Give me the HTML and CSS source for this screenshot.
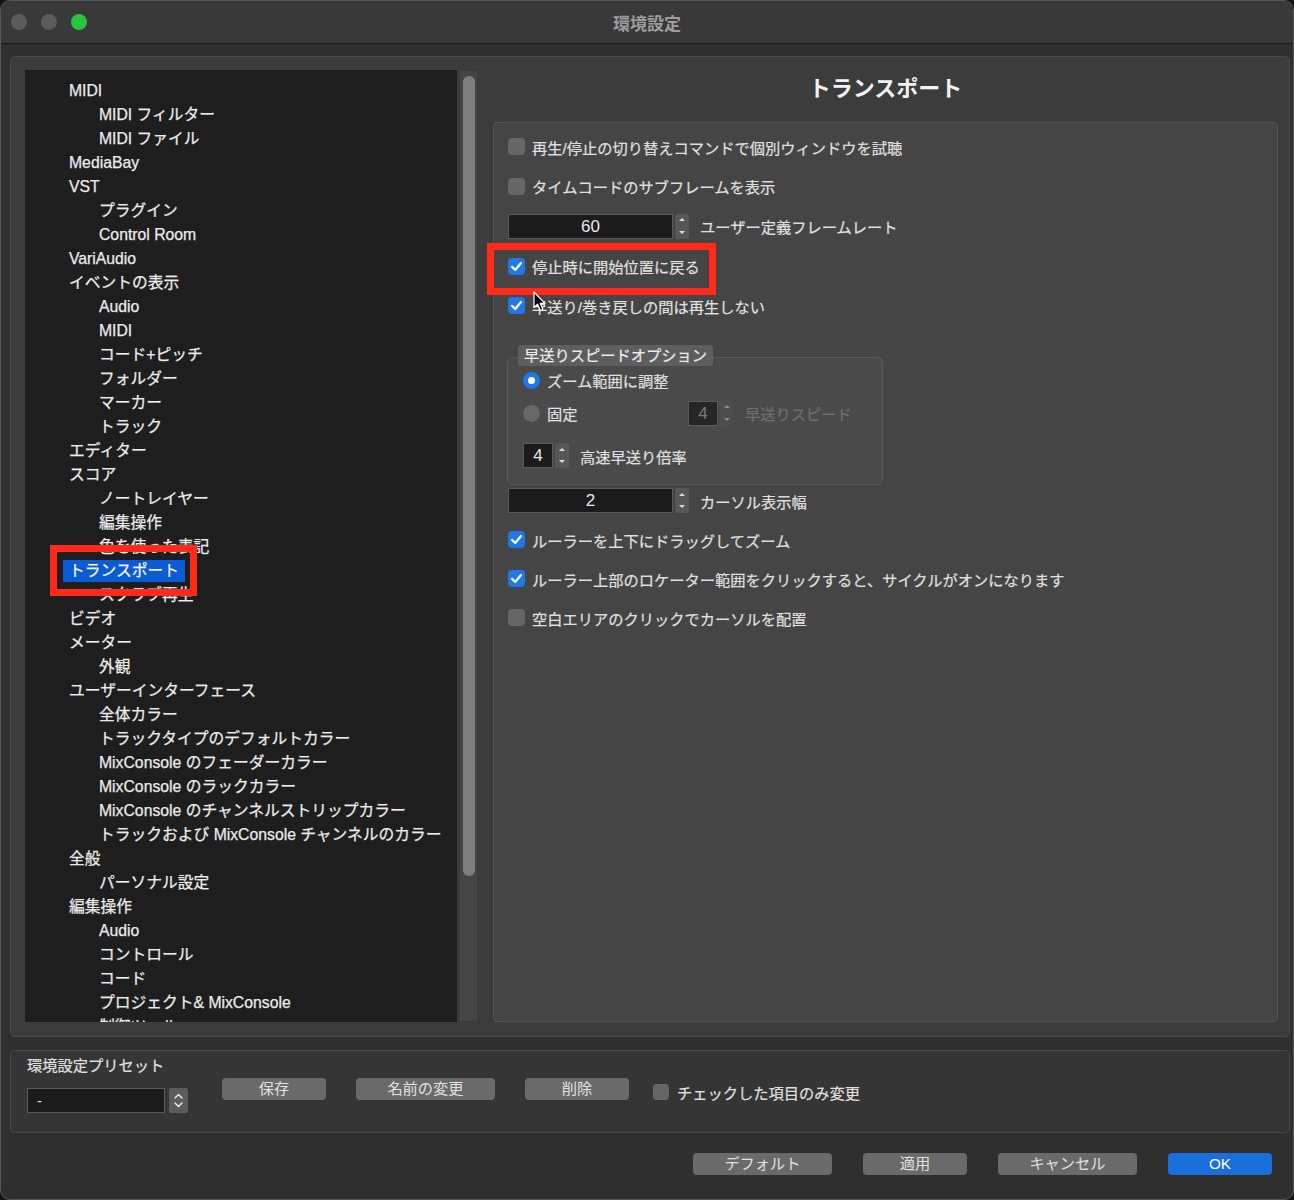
FILE: index.html
```html
<!DOCTYPE html>
<html lang="ja">
<head>
  <meta charset="UTF-8" />
  <meta name="viewport" content="width=device-width, initial-scale=1.0">
  <title>環境設定</title>
  <link rel="stylesheet" href="styles.css">
</head>
<body>
  <div class="win">
    <div class="titlebar">
      <div class="lights"><span class="dot"></span><span class="dot"></span><span class="dot green"></span></div>
      <div class="title">環境設定</div>
      <div></div>
    </div>

    <div class="main">
      <div class="tree">
        <div class="l0">MIDI</div>
        <div class="l1">MIDI フィルター</div>
        <div class="l1">MIDI ファイル</div>
        <div class="l0">MediaBay</div>
        <div class="l0">VST</div>
        <div class="l1">プラグイン</div>
        <div class="l1">Control Room</div>
        <div class="l0">VariAudio</div>
        <div class="l0">イベントの表示</div>
        <div class="l1">Audio</div>
        <div class="l1">MIDI</div>
        <div class="l1">コード+ピッチ</div>
        <div class="l1">フォルダー</div>
        <div class="l1">マーカー</div>
        <div class="l1">トラック</div>
        <div class="l0">エディター</div>
        <div class="l0">スコア</div>
        <div class="l1">ノートレイヤー</div>
        <div class="l1">編集操作</div>
        <div class="l1">色を使った表記</div>
        <div class="l0"><span class="sel">トランスポート</span></div>
        <div class="l1">スクラブ再生</div>
        <div class="l0">ビデオ</div>
        <div class="l0">メーター</div>
        <div class="l1">外観</div>
        <div class="l0">ユーザーインターフェース</div>
        <div class="l1">全体カラー</div>
        <div class="l1">トラックタイプのデフォルトカラー</div>
        <div class="l1">MixConsole のフェーダーカラー</div>
        <div class="l1">MixConsole のラックカラー</div>
        <div class="l1">MixConsole のチャンネルストリップカラー</div>
        <div class="l1">トラックおよび MixConsole チャンネルのカラー</div>
        <div class="l0">全般</div>
        <div class="l1">パーソナル設定</div>
        <div class="l0">編集操作</div>
        <div class="l1">Audio</div>
        <div class="l1">コントロール</div>
        <div class="l1">コード</div>
        <div class="l1">プロジェクト&amp; MixConsole</div>
        <div class="l1">制御ツール</div>
      </div>
      <div class="scroll"><div class="thumb"></div></div>

      <div class="page">
        <h1>トランスポート</h1>
        <div class="box">
          <div class="row r1"><span class="cb"></span><span class="txt">再生/停止の切り替えコマンドで個別ウィンドウを試聴</span></div>
          <div class="row"><span class="cb"></span><span class="txt">タイムコードのサブフレームを表示</span></div>
          <div class="row">
            <div class="spin"><span class="field wide">60</span><span class="step"><i class="up"></i><i class="dn"></i></span></div>
            <span class="txt spin-label">ユーザー定義フレームレート</span>
          </div>
          <div class="row"><span class="cb on"><svg viewBox="0 0 17 17"><polyline points="4,8.8 7.2,12 13,5"/></svg></span><span class="txt">停止時に開始位置に戻る</span></div>
          <div class="row r5"><span class="cb on"><svg viewBox="0 0 17 17"><polyline points="4,8.8 7.2,12 13,5"/></svg></span><span class="txt">早送り/巻き戻しの間は再生しない</span></div>

          <div class="group">
            <div class="legend">早送りスピードオプション</div>
            <div class="opt first"><span class="radio on"></span><span class="txt">ズーム範囲に調整</span></div>
            <div class="opt second">
              <div class="opt-main"><span class="radio"></span><span class="txt">固定</span></div>
              <div class="spin off"><span class="field small">4</span><span class="step"><i class="up"></i><i class="dn"></i></span></div>
              <span class="txt dim">早送りスピード</span>
            </div>
            <div class="opt third">
              <div class="spin"><span class="field small">4</span><span class="step"><i class="up"></i><i class="dn"></i></span></div>
              <span class="txt">高速早送り倍率</span>
            </div>
          </div>

          <div class="row short">
            <div class="spin"><span class="field wide">2</span><span class="step"><i class="up"></i><i class="dn"></i></span></div>
            <span class="txt spin-label">カーソル表示幅</span>
          </div>
          <div class="row tail first-tail"><span class="cb on"><svg viewBox="0 0 17 17"><polyline points="4,8.8 7.2,12 13,5"/></svg></span><span class="txt">ルーラーを上下にドラッグしてズーム</span></div>
          <div class="row tail"><span class="cb on"><svg viewBox="0 0 17 17"><polyline points="4,8.8 7.2,12 13,5"/></svg></span><span class="txt">ルーラー上部のロケーター範囲をクリックすると、サイクルがオンになります</span></div>
          <div class="row tail"><span class="cb"></span><span class="txt">空白エリアのクリックでカーソルを配置</span></div>
        </div>
      </div>
    </div>

    <div class="presets">
      <div class="preset-col">
        <div class="preset-title">環境設定プリセット</div>
        <div class="preset-field">
          <span class="field preset">-</span>
          <span class="chev"><svg viewBox="0 0 19 25"><polyline points="6,10 9.5,6.5 13,10"/><polyline points="6,15 9.5,18.5 13,15"/></svg></span>
        </div>
      </div>
      <button class="btn first-btn">保存</button>
      <button class="btn mid">名前の変更</button>
      <button class="btn">削除</button>
      <div class="check-only"><span class="cb"></span><span class="txt">チェックした項目のみ変更</span></div>
    </div>

    <div class="actions">
      <button class="btn mid">デフォルト</button>
      <button class="btn">適用</button>
      <button class="btn mid">キャンセル</button>
      <button class="btn ok">OK</button>
    </div>

    <div class="mark mark-tree"></div>
    <div class="mark mark-opt"></div>
    <svg class="cursor" viewBox="0 0 14 21"><path d="M1 1 L1 16.5 L4.6 13.2 L7.4 19.6 L9.9 18.5 L7.2 12.3 L12 12.3 Z"/></svg>
  </div>
</body>
</html>
```

FILE: styles.css
```css
body { margin: 0; background: #141414; font-family: "Liberation Sans", "Noto Sans CJK JP", sans-serif; color: #e4e4e4; }
.win { position: relative; width: 1294px; height: 1200px; box-sizing: border-box; background: #2f2f2f; border: 1px solid #575757; border-radius: 10px; overflow: hidden; }

/* title bar */
.titlebar { display: grid; grid-template-columns: 1fr auto 1fr; align-items: center; height: 42px; background: #393939; border-bottom: 1px solid #1b1b1b; }
.lights { display: flex; gap: 14px; padding-left: 10px; }
.dot { width: 16px; height: 16px; border-radius: 50%; background: #5b5b5b; }
.dot.green { background: #2bc43f; }
.title { font-size: 17px; font-weight: bold; color: #9e9e9e; }

/* main panel */
.main { display: flex; height: 981px; box-sizing: border-box; margin: 12px 3px 0 9px; padding: 13px 11px 14px 14px; background: #3c3c3c; border: 1px solid #4b4b4b; border-radius: 5px; }
.tree { width: 432px; flex: none; padding-top: 9px; box-sizing: border-box; background: #1e1e1e; overflow: hidden; font-size: 15.75px; line-height: 24px; color: #ececec; white-space: nowrap; -webkit-text-stroke: 0.25px #ececec; }
.l0 { padding-left: 44px; }
.l1 { padding-left: 74px; }
.sel { display: inline-block; line-height: 22px; margin-left: -6px; padding: 0 6px; background: #0b5cd4; color: #fff; }
.scroll { width: 19px; flex: none; margin-left: 2px; background: #454545; border: 1px solid #3a3a3a; box-sizing: border-box; }
.thumb { width: 12px; height: 800px; margin: 5px 0 0 3px; background: #7e7e7e; border-radius: 6px; }

.page { flex: 1; margin-left: 15px; display: flex; flex-direction: column; }
h1 { margin: 0; height: 52px; line-height: 38px; text-align: center; font-size: 22px; font-weight: bold; color: #f2f2f2; }
.box { flex: 1; padding: 4px 14px 0 14px; background: #454545; border: 1px solid #535353; border-radius: 4px; }

.row { display: flex; align-items: center; height: 40px; }
.row.r1, .row.r5 { height: 39px; }
.row.short { height: 25px; margin-top: 3px; }
.row.tail { height: 39px; }
.row.first-tail { margin-top: 7px; }
.txt { font-size: 15.25px; color: #e0e0e0; white-space: nowrap; -webkit-text-stroke: 0.2px currentColor; }
.cb { width: 17px; height: 17px; flex: none; margin-right: 7px; border-radius: 4px; background: #666; box-sizing: border-box; }
.cb.on { background: #1f78e6; }
.cb svg { display: block; width: 17px; height: 17px; fill: none; stroke: #fff; stroke-width: 2.2; stroke-linecap: round; stroke-linejoin: round; }

/* spinner */
.spin { display: flex; height: 25px; flex: none; }
.field { box-sizing: border-box; height: 25px; background: #1b1b1b; border: 1px solid #5a5a5a; color: #e8e8e8; font-size: 17px; line-height: 23px; text-align: center; }
.field.wide { width: 165px; }
.field.small { width: 30px; }
.step { width: 14px; margin-left: 2px; display: flex; flex-direction: column; background: #575757; border-radius: 2px; }
.step i { flex: 1; display: flex; align-items: center; justify-content: center; }
.step i::before { content: ""; border-left: 3px solid transparent; border-right: 3px solid transparent; }
.step .up::before { border-bottom: 3px solid #dcdcdc; }
.step .dn::before { border-top: 3px solid #dcdcdc; }
.spin-label { margin-left: 11px; }
.spin.off .field { background: #262626; color: #7a7a7a; border-color: #585858; }
.spin.off .step { background: #4d4d4d; }
.spin.off .step i::before { border-bottom-color: #8a8a8a; border-top-color: #8a8a8a; }

/* group box */
.group { width: 376px; box-sizing: border-box; height: 128px; margin: 32px 0 0 -1px; padding: 0 0 0 15px; background: #4a4a4a; border: 1px solid #5a5a5a; border-radius: 5px; }
.legend { width: max-content; height: 21px; line-height: 21px; margin: -13px 0 0 -5px; padding: 0 6px; background: #5e5e5e; border-radius: 3px; font-size: 15.25px; color: #ececec; -webkit-text-stroke: 0.2px currentColor; }
.opt { display: flex; align-items: center; }
.opt.first { height: 24px; margin-top: 2px; }
.opt.second { height: 30px; margin-top: 6px; }
.opt.third { height: 25px; margin-top: 15px; }
.opt-main { display: flex; align-items: center; width: 165px; }
.opt .spin + .txt { margin-left: 11px; }
.radio { width: 17px; height: 17px; flex: none; margin-right: 7px; border-radius: 50%; background: #676767; box-sizing: border-box; }
.radio.on { border: 5.5px solid #1f78e6; background: #fff; }
.dim { color: #707070; }

/* presets */
.presets { display: flex; align-items: flex-start; height: 83px; box-sizing: border-box; margin: 13px 3px 0 9px; background: #353535; border: 1px solid #494949; border-radius: 5px; }
.preset-col { margin: 5px 0 0 16px; }
.preset-title { font-size: 15.25px; line-height: 20px; color: #e2e2e2; -webkit-text-stroke: 0.2px currentColor; }
.preset-field { display: flex; margin-top: 12px; }
.field.preset { width: 138px; text-align: left; padding-left: 9px; font-size: 15px; }
.chev { width: 19px; height: 25px; margin-left: 4px; background: #5c5c5c; border-radius: 2px; }
.chev svg { display: block; width: 19px; height: 25px; fill: none; stroke: #e6e6e6; stroke-width: 1.5; stroke-linecap: round; stroke-linejoin: round; }
.btn { width: 104px; height: 22px; padding: 0; border: none; border-radius: 4px; background: #6a6a6a; color: #e0e0e0; font-family: inherit; font-size: 15.25px; line-height: 22px; }
.btn.mid { width: 139px; }
.presets .btn { margin-top: 27px; margin-left: 30px; }
.presets .btn.first-btn { margin-left: 34px; }
.check-only { display: flex; align-items: center; margin: 30px 0 0 24px; }
.check-only .cb { width: 16px; height: 16px; margin-right: 8px; }

/* action buttons */
.actions { display: flex; justify-content: flex-end; gap: 31px; margin-top: 20px; padding-right: 21px; }
.btn.ok { background: #1b6fdd; color: #fff; }

/* annotations */
.mark { position: absolute; box-sizing: border-box; border: 7px solid #ff2a1a; }
.mark-tree { left: 49px; top: 544px; width: 147px; height: 51px; }
.mark-opt { left: 486px; top: 242px; width: 229px; height: 52px; }
.cursor { position: absolute; left: 532px; top: 290px; width: 14px; height: 21px; fill: #000; stroke: #fff; stroke-width: 1.2; stroke-linejoin: round; }
```
